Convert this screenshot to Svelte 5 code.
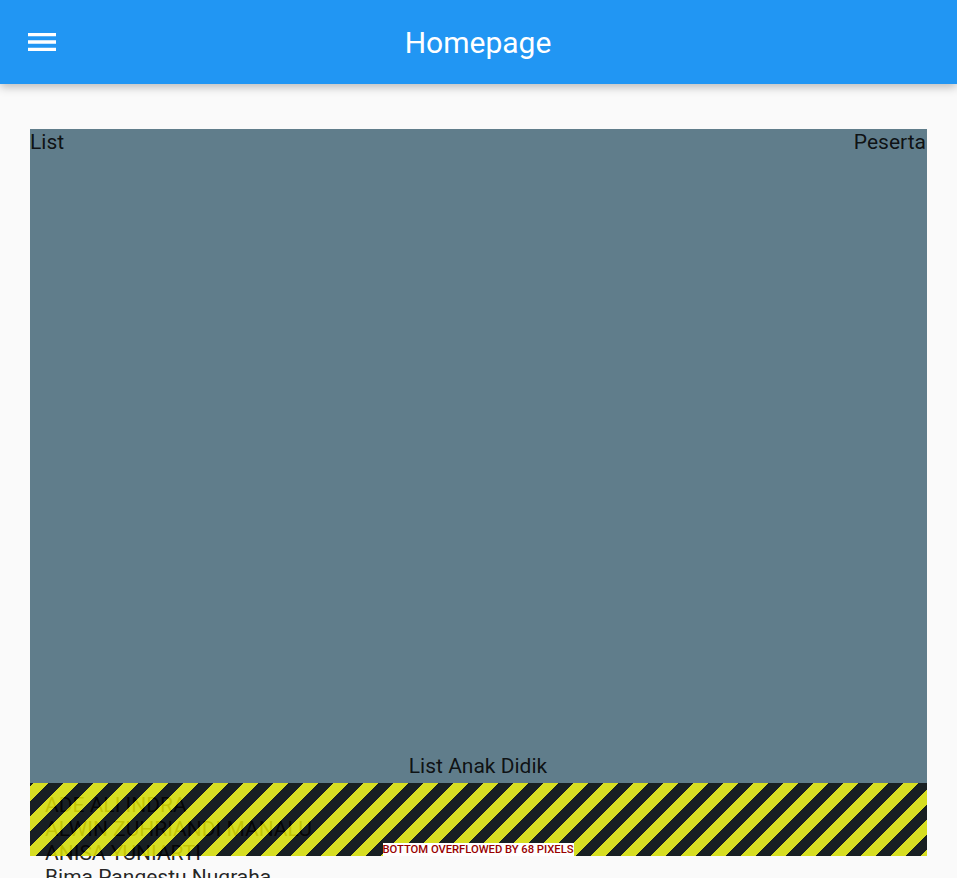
<script>
  const names = ['ADE ALI INDRA', 'ALWIN ZUHRIANDI MANALU', 'ANISA YUNIARTI', 'Bima Pangestu Nugraha'];
</script>

<div class="screen">
  <header>
    <button aria-label="Open navigation menu">
      <svg width="36" height="36" viewBox="0 0 36 36" fill="#fff">
        <path d="M4 9h28v3.25H4zM4 16.3h28v3.4H4zM4 23.75h28v3.25H4z" />
      </svg>
    </button>
    <h1>Homepage</h1>
  </header>
  <main>
    <div class="panel">
      <div class="row"><span>List</span><span>Peserta</span></div>
      <div class="caption">List Anak Didik</div>
      <ul>
        {#each names as name}
          <li>{name}</li>
        {/each}
      </ul>
      <div class="overflow"><span>BOTTOM OVERFLOWED BY 68 PIXELS</span></div>
    </div>
  </main>
</div>

<style>
  .screen {
    display: flex;
    flex-direction: column;
    height: 878px;
    overflow: hidden;
    background: #fafafa;
    font-family: Roboto, sans-serif;
    color: rgba(0, 0, 0, 0.87);
  }
  header {
    position: relative;
    flex: none;
    height: 84px;
    display: grid;
    grid-template-columns: 84px 1fr 84px;
    align-items: center;
    background: #2196f3;
    box-shadow: 0 3px 9px rgba(0, 0, 0, 0.26);
  }
  button {
    display: grid;
    place-items: center;
    height: 84px;
    padding: 0;
    border: 0;
    background: none;
  }
  h1 {
    margin: 0;
    padding-right: 1px;
    text-align: center;
    color: #fff;
    font-size: 30px;
    line-height: 35px;
    font-weight: 400;
  }
  main {
    flex: 1;
    min-height: 0;
    padding: 45px 30px 0;
  }
  .panel {
    position: relative;
    display: flex;
    flex-direction: column;
    height: 726.67px;
    background: #607d8b;
    font-size: 21px;
    line-height: 24px;
  }
  .row {
    display: flex;
    justify-content: space-between;
    height: 24px;
    padding: 1px 1px 0 0;
  }
  .caption {
    flex: none;
    margin-top: 600px;
    padding-right: 1px;
    text-align: center;
  }
  ul {
    flex: none;
    margin: 0;
    padding: 15px 15px 0;
    list-style: none;
  }
  .overflow {
    position: absolute;
    left: 0;
    right: 0;
    bottom: 0;
    height: 73px;
    display: flex;
    justify-content: center;
    align-items: flex-end;
    background: repeating-linear-gradient(135deg,
      rgba(0, 0, 0, 0.75) 0 2.828px,
      rgba(255, 255, 0, 0.75) 2.828px 13.435px,
      rgba(0, 0, 0, 0.75) 13.435px 21.213px);
  }
  .overflow span {
    height: 13px;
    padding-right: 1px;
    background: #fff;
    color: #900;
    font-size: 11.25px;
    line-height: 13px;
    font-weight: 500;
    letter-spacing: -0.03px;
    white-space: nowrap;
  }
</style>
